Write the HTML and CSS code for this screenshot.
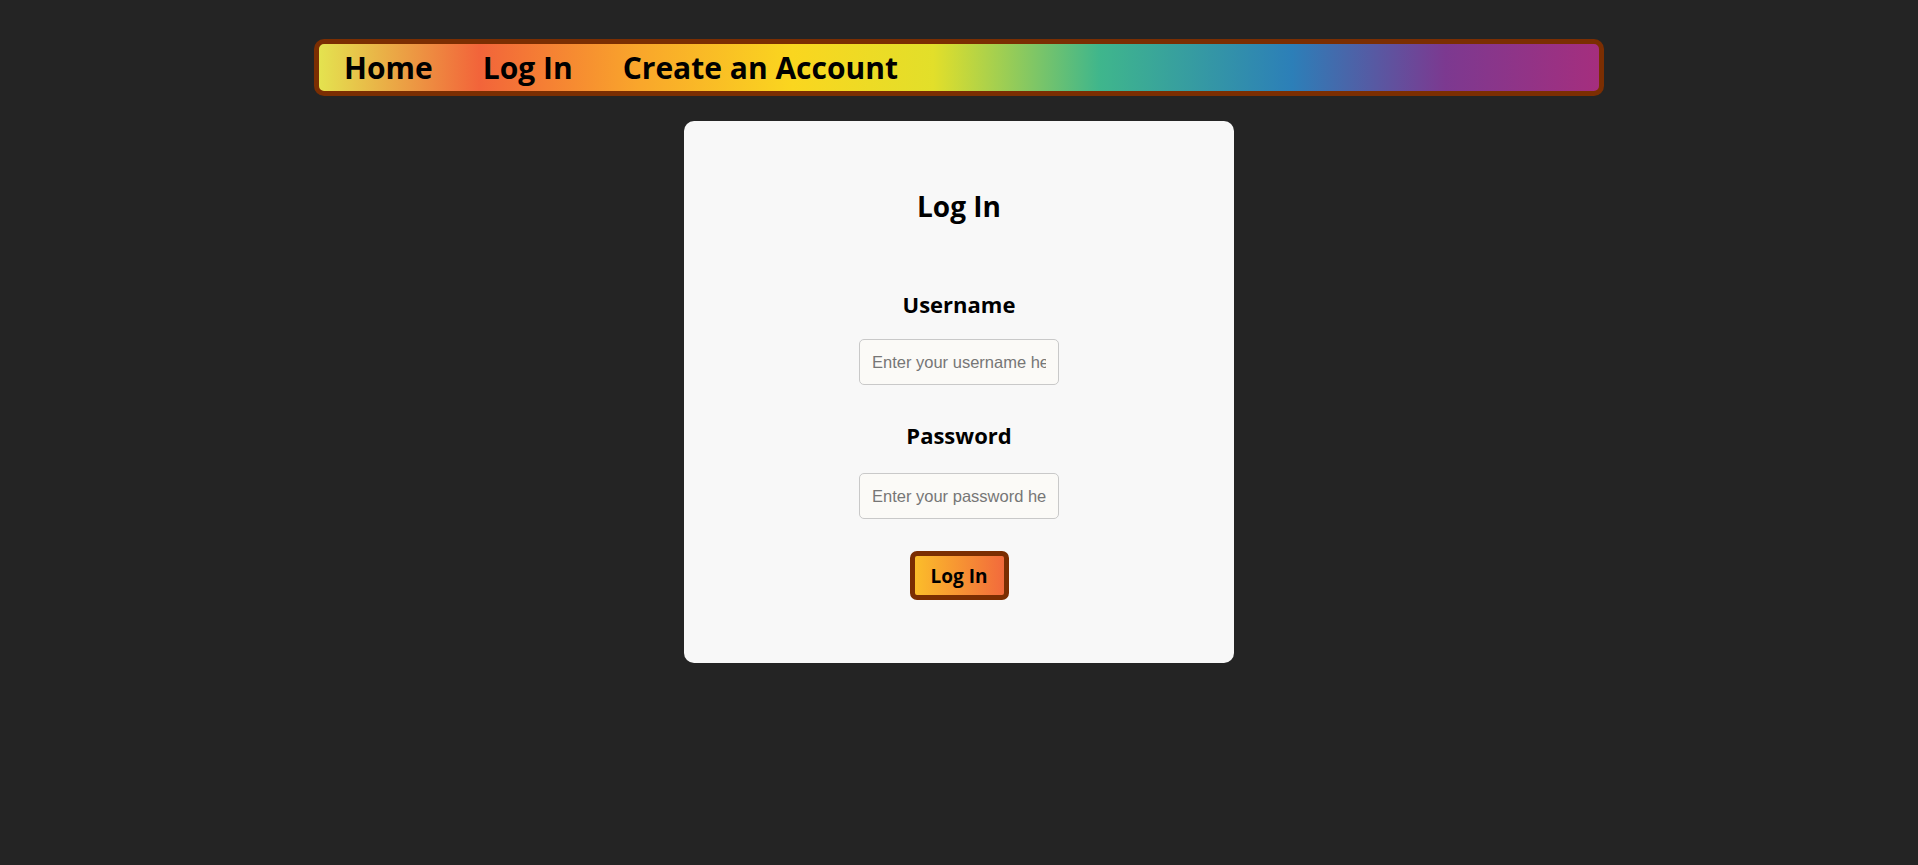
FILE: index.html
```html
<!DOCTYPE html>
<html lang="en">
<head>
<meta charset="utf-8">
<title>Log In</title>
<link rel="stylesheet" href="styles.css">
</head>
<body>
<nav class="topnav">
  <a class="nav-link" href="#">Home</a>
  <a class="nav-link" href="#">Log In</a>
  <a class="nav-link" href="#">Create an Account</a>
</nav>
<main class="card">
  <h1 class="card-title">Log In</h1>
  <form class="login-form">
    <div class="field">
      <label class="field-label" for="username">Username</label>
      <input class="field-input" id="username" type="text" placeholder="Enter your username here">
    </div>
    <div class="field">
      <label class="field-label" for="password">Password</label>
      <input class="field-input" id="password" type="password" placeholder="Enter your password here">
    </div>
    <button class="submit-btn" type="button">Log In</button>
  </form>
</main>
</body>
</html>
```
FILE: styles.css
```css
* { box-sizing: border-box; }

body {
  margin: 0;
  padding-top: 39px;
  background: #242424;
  font-family: "Open Sans", "Noto Sans", sans-serif;
  color: #000;
}

.topnav {
  width: 1290px;
  height: 57px;
  margin: 0 auto;
  border: 5px solid #7b2e02;
  border-radius: 10px;
  display: flex;
  align-items: center;
  background: linear-gradient(to right,
    #e4e34f 0%,
    #f2643a 12.5%,
    #f9a62b 25%,
    #fad61f 37%,
    #e2df2a 48%,
    #3fb68c 61%,
    #2c7fb8 76%,
    #7c3990 88%,
    #a52e7e 100%);
}

.nav-link {
  padding: 0 25px;
  font-size: 30px;
  font-weight: 700;
  line-height: 40px;
  color: #000;
  text-decoration: none;
}

.card {
  width: 550px;
  margin: 25px auto 0;
  padding: 66px 0 63px;
  background: #f8f8f8;
  border-radius: 10px;
  display: flex;
  flex-direction: column;
  align-items: center;
}

.card-title {
  margin: 0 0 64px;
  font-size: 28px;
  line-height: 38px;
  font-weight: 700;
}

.login-form {
  display: flex;
  flex-direction: column;
  align-items: center;
}

.field {
  display: flex;
  flex-direction: column;
  align-items: center;
  margin-bottom: 35px;
}

.field + .field { margin-bottom: 32px; }

.field-label {
  font-size: 22px;
  font-weight: 700;
  line-height: 30px;
  margin-bottom: 20px;
}

.field + .field .field-label { margin-bottom: 23px; }

.field-input {
  width: 200px;
  height: 46px;
  padding: 0 12px;
  border: 1px solid #c9c9c9;
  border-radius: 5px;
  background: #fbfaf7;
  font-family: "Liberation Sans", Arial, sans-serif;
  font-size: 16.5px;
  color: #333;
}

.field-input::placeholder { color: #767676; }

.submit-btn {
  width: 99px;
  height: 49px;
  padding: 0;
  border: 5px solid #7b2e02;
  border-radius: 7px;
  background: linear-gradient(to right, #fbbd2a, #f26a3c);
  font-family: "Open Sans", "Noto Sans", sans-serif;
  font-size: 19px;
  font-weight: 700;
  color: #000;
}
```
